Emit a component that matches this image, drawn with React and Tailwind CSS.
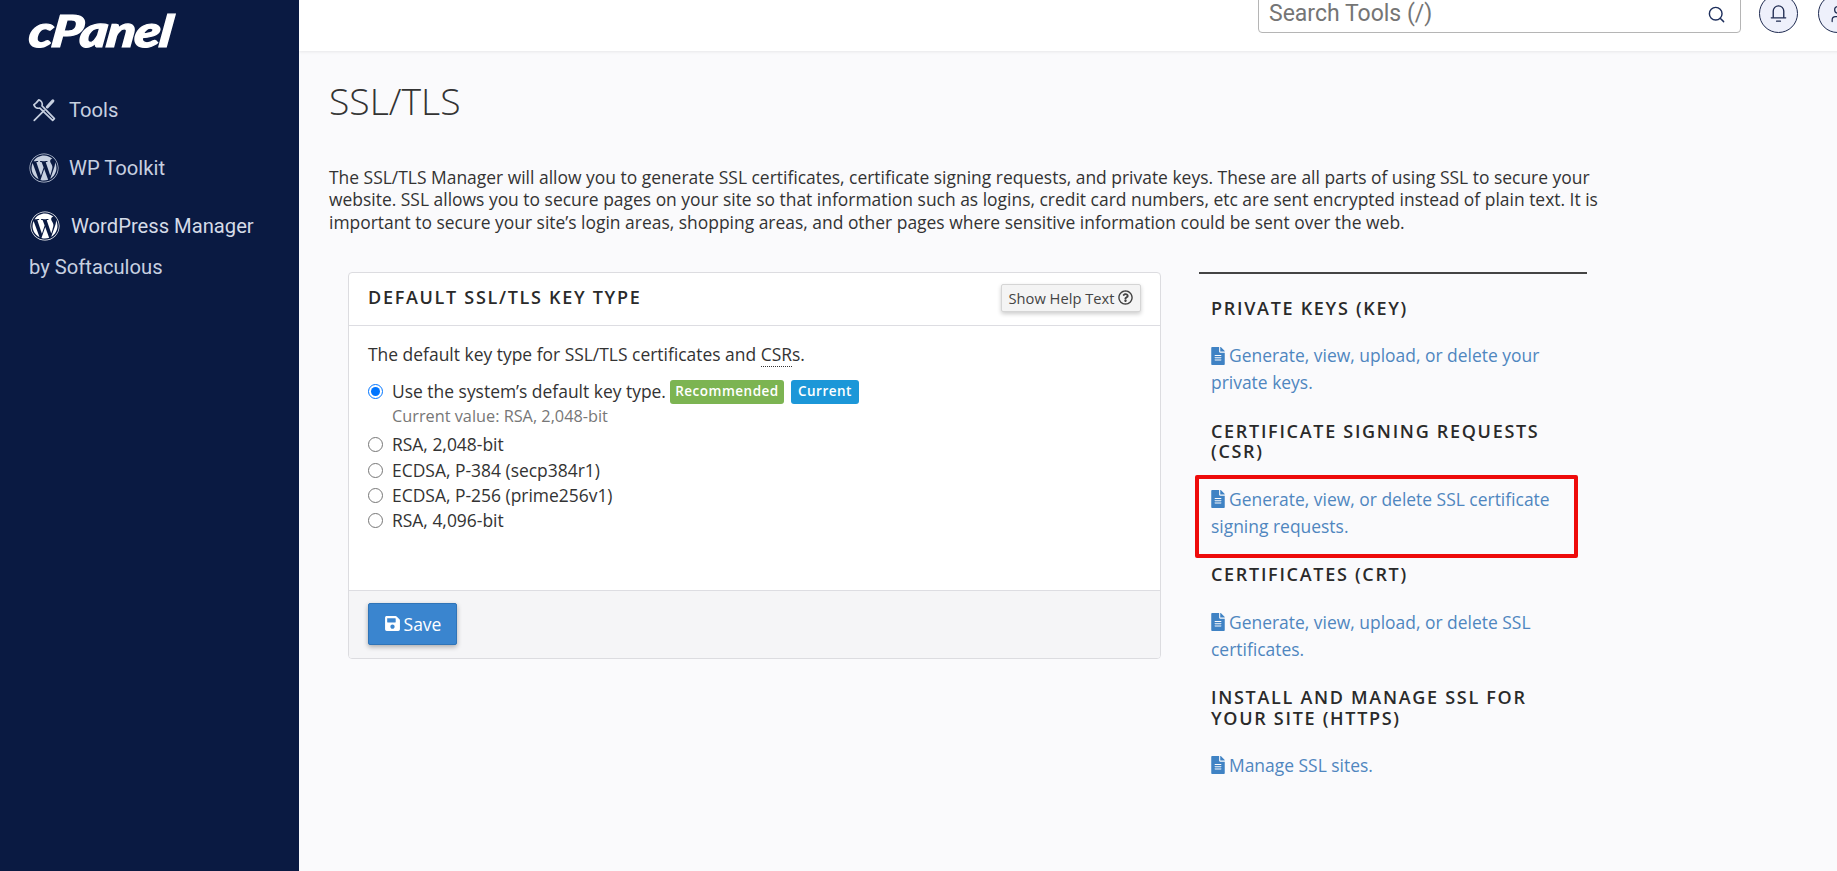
import { Search, User } from 'lucide-react'
import { FaWordpress, FaFileAlt, FaSave, FaRegQuestionCircle } from 'react-icons/fa'

const keyTypes = ['RSA, 2,048-bit', 'ECDSA, P-384 (secp384r1)', 'ECDSA, P-256 (prime256v1)', 'RSA, 4,096-bit']

const sections = [
  { title: 'Private Keys (KEY)', link: 'Generate, view, upload, or delete your private keys.' },
  { title: 'Certificate Signing Requests (CSR)', link: 'Generate, view, or delete SSL certificate signing requests.', marked: true },
  { title: 'Certificates (CRT)', link: 'Generate, view, upload, or delete SSL certificates.' },
  { title: 'Install and Manage SSL for your site (HTTPS)', link: 'Manage SSL sites.' },
]

function ToolsIcon() {
  return (
    <svg className="w-[26px] h-[26px]" viewBox="0 0 24 24" fill="none" stroke="currentColor" strokeWidth={1.6} strokeLinecap="round" strokeLinejoin="round">
      <path d="M7.2 2.6L5 5.2l-2.4 2a4.6 4.6 0 0 0 5.6 3L20 21.6l1.6-1.6L10.2 8.2a4.6 4.6 0 0 0-3-5.6z" />
      <path d="M3 21.5l9-9" />
      <path strokeWidth={2.8} d="M15 9.2l5.2-5.6" />
    </svg>
  )
}

function BellIcon() {
  return (
    <svg className="w-[23px] h-[23px]" viewBox="0 0 24 24" fill="none" stroke="currentColor" strokeWidth={1.4} strokeLinecap="round" strokeLinejoin="round">
      <path d="M6.5 16V9.5a5.5 5.5 0 0 1 11 0V16" />
      <path d="M4.5 16.5h15" />
      <path d="M10 20h4" />
    </svg>
  )
}

function Sidebar() {
  return (
    <aside className="w-[299px] shrink-0 bg-[#0a1a42] text-[#c7d0e0] font-['Roboto',sans-serif] text-[20.2px]">
      <div className="pl-[25px] pt-[8px] h-[51px] text-white font-['Lato',sans-serif] font-black italic text-[44px] leading-[44px] tracking-[-1px] origin-left scale-x-[1.21] -skew-x-6 [-webkit-text-stroke:1.2px_white]">
        cPanel
      </div>
      <nav className="pl-[29px] pt-[47px] leading-[24px]">
        <a className="flex items-center h-[24px] gap-[12px] pl-[2px]"><ToolsIcon />Tools</a>
        <a className="flex items-center h-[24px] gap-[10px] mt-[34px]"><FaWordpress className="text-[30px]" />WP Toolkit</a>
        <a className="flex items-center h-[24px] gap-[11px] mt-[34px] pl-[1px] text-[#d5dbe7]"><FaWordpress className="text-[30px] text-white" />WordPress Manager</a>
        <div className="mt-[17px]">by Softaculous</div>
      </nav>
    </aside>
  )
}

function Header() {
  return (
    <header className="h-[51px] shrink-0 bg-white shadow-[0_1px_3px_rgba(0,0,0,0.08)] flex items-end justify-end gap-[18px] pb-[18px] overflow-hidden -mr-[20px]">
      <div className="w-[483px] h-[44px] border border-[#b5b5b5] rounded-[4px] flex items-center justify-between pl-[10px] pr-[14px] pt-[7px] text-[23px] text-[#757575] font-['Roboto',sans-serif]">
        Search Tools (/)
        <Search size={19} strokeWidth={1.8} className="text-[#1e2f5c]" />
      </div>
      <div className="flex gap-[20px]">
        <div className="w-[39px] h-[39px] rounded-full border border-[#1e2a50] bg-[#eef0fb] flex items-center justify-center text-[#1e2a50]">
          <BellIcon />
        </div>
        <div className="w-[39px] h-[39px] rounded-full border border-[#1e2a50] bg-[#eef0fb] flex items-center justify-center text-[#1e2a50]">
          <User size={20} strokeWidth={1.5} />
        </div>
      </div>
    </header>
  )
}

function KeyTypePanel() {
  return (
    <section className="w-[813px] h-[387px] bg-white border border-[#dcdce0] rounded-[4px] flex flex-col overflow-hidden">
      <div className="h-[53px] shrink-0 border-b border-[#dddde2] flex items-center justify-between pl-[19px] pr-[19px] pb-[2px]">
        <h2 className="-mt-[1px] text-[18px] font-[550] tracking-[1.7px] uppercase text-[#2a2a2a]">Default SSL/TLS Key Type</h2>
        <button className="w-[140px] h-[28px] bg-[#f4f4f4] border border-[#d5d5d5] rounded-[2px] shadow-[0_2px_4px_rgba(0,0,0,0.2)] flex items-center justify-center gap-[4px] text-[14.7px] text-[#444]">
          Show Help Text <FaRegQuestionCircle className="text-[15px]" />
        </button>
      </div>
      <div className="flex-1 pl-[19px] pt-[16px] text-[17.45px] leading-[25.2px] text-[#333]">
        <p>The default key type for SSL/TLS certificates and <abbr className="no-underline border-b border-dotted border-[#333] leading-none">CSR</abbr>s.</p>
        <label className="flex items-center gap-[9px] mt-[12px]">
          <input type="radio" name="key" defaultChecked className="w-[15px] h-[15px] m-0" />
          Use the system’s default key type.
          <span className="flex gap-[7px] -ml-[5px]">
            <span className="w-[114px] h-[24px] rounded-[3px] bg-[#7cb452] text-white text-[13.5px] font-semibold tracking-[0.5px] flex items-center justify-center">Recommended</span>
            <span className="w-[68px] h-[24px] rounded-[3px] bg-[#1c97d8] text-white text-[13.5px] font-semibold tracking-[0.5px] flex items-center justify-center">Current</span>
          </span>
        </label>
        <div className="pl-[24px] pb-[4px] text-[16.3px] leading-[24px] text-[#777]">Current value: RSA, 2,048-bit</div>
        {keyTypes.map(k => (
          <label key={k} className="flex items-center gap-[9px]">
            <input type="radio" name="key" className="w-[15px] h-[15px] m-0" />
            {k}
          </label>
        ))}
      </div>
      <div className="h-[68px] shrink-0 bg-[#f5f5f7] border-t border-[#dddde2] pl-[19px] pt-[12px]">
        <button className="w-[89px] h-[42px] bg-[#3a85cf] border border-[#2f74b8] rounded-[2px] shadow-[0_2px_5px_rgba(0,0,0,0.3)] text-white text-[17.5px] flex items-center justify-center gap-[3px]">
          <FaSave className="text-[17px]" /> Save
        </button>
      </div>
    </section>
  )
}

function SideLinks() {
  return (
    <div className="w-[388px] border-t-2 border-[#444] px-[12px] pt-[24px] flex flex-col gap-[24.4px]">
      {sections.map(s => (
        <div key={s.title}>
          <h3 className="mb-[24px] text-[18px] leading-[20.5px] font-[550] tracking-[1.7px] uppercase text-[#2a2a2a]">{s.title}</h3>
          <div className="relative text-[17.45px] leading-[27px] text-[#4f86bf]">
            <FaFileAlt className="inline text-[#3f82c4] text-[18px] -ml-[2px] mr-[2px] -mt-[4px]" />
            {s.link}
            {s.marked && <div className="absolute -left-[16px] -right-[3px] -top-[11px] -bottom-[18px] border-[4px] border-[#ee0b0b] rounded-[2px]" />}
          </div>
        </div>
      ))}
    </div>
  )
}

export default function App() {
  return (
    <div className="h-screen overflow-hidden flex bg-[#fafafc] font-['Open_Sans',sans-serif]">
      <Sidebar />
      <div className="flex-1 min-w-0 flex flex-col overflow-hidden">
        <Header />
        <main className="pl-[30px]">
          <h1 className="mt-[26px] text-[37.3px] leading-[48px] font-light text-[#333]">SSL/TLS</h1>
          <p className="mt-[41px] w-[1290px] text-[17.45px] leading-[22.3px] text-[#333]">
            The SSL/TLS Manager will allow you to generate SSL certificates, certificate signing requests, and private keys. These are all parts of using SSL to secure your website. SSL allows you to secure pages on your site so that information such as logins, credit card numbers, etc are sent encrypted instead of plain text. It is important to secure your site’s login areas, shopping areas, and other pages where sensitive information could be sent over the web.
          </p>
          <div className="mt-[39px] ml-[19px] flex gap-[38px] items-start">
            <KeyTypePanel />
            <SideLinks />
          </div>
        </main>
      </div>
    </div>
  )
}
